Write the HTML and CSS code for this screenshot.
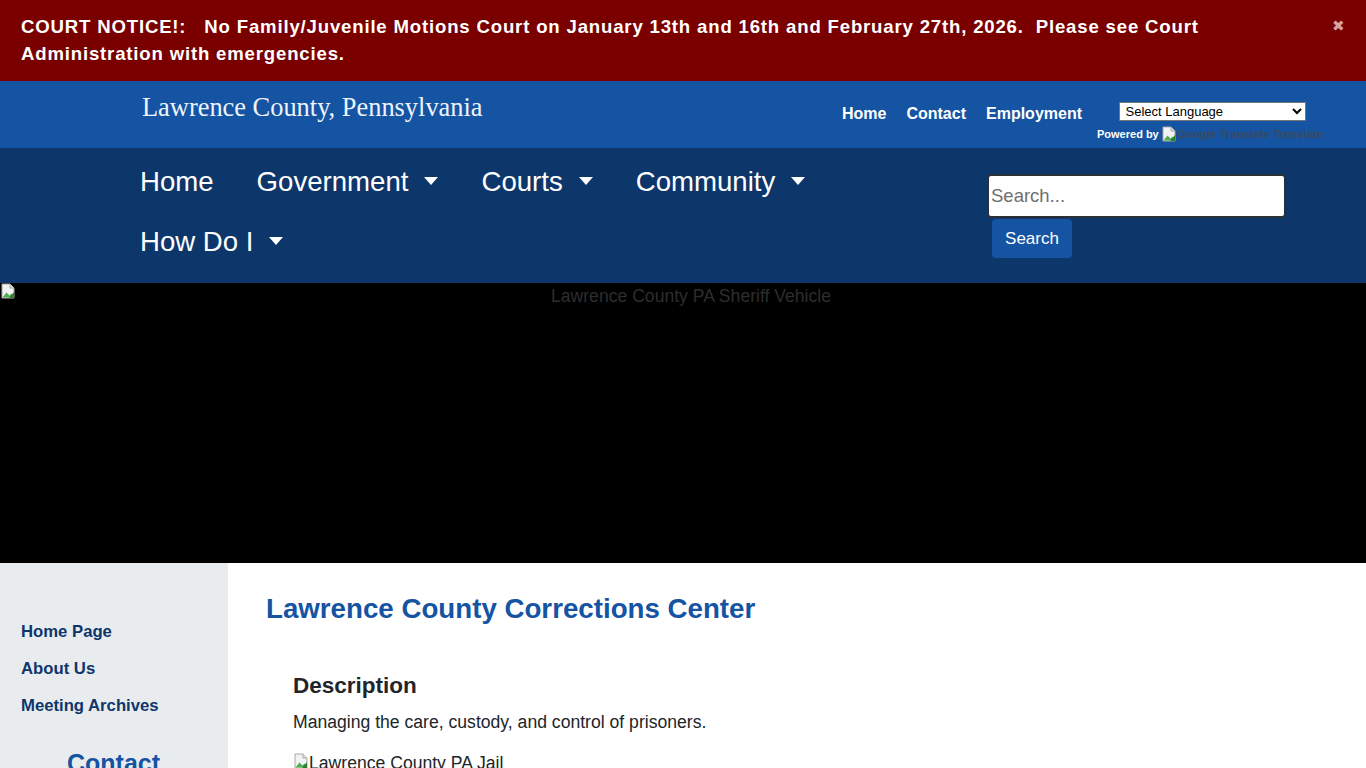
FILE: index.html
```html
<!DOCTYPE html>
<html lang="en">
<head>
<meta charset="utf-8">
<title>Lawrence County Corrections Center</title>
<link rel="stylesheet" href="styles.css">
</head>
<body>
<div class="notice">
  <p class="notice-text">COURT NOTICE!:&nbsp;&nbsp; No Family/Juvenile Motions Court on January 13th and 16th and February 27th, 2026.&nbsp; Please see Court Administration with emergencies.</p>
  <span class="notice-close">&#x2716;</span>
</div>
<header class="topbar">
  <div class="site-title">Lawrence County, Pennsylvania</div>
  <div class="top-right">
    <nav class="top-links">
      <a href="#">Home</a>
      <a href="#">Contact</a>
      <a href="#">Employment</a>
    </nav>
    <div class="translate">
      <select class="lang-select"><option>Select Language</option></select>
      <div class="powered">
        <span class="powered-by">Powered by</span>
        <span class="broken-img small"><svg viewBox="0 0 16 16" width="16" height="16"><path d="M2 1h8l4 4v10H2z" fill="#f2f2f2" stroke="#a9a9a9"/><path d="M10 1v4h4" fill="#ddd" stroke="#a9a9a9"/><path d="M2.5 14.5l4-5 3 3 2-2 2.5 4z" fill="#4caf50"/><path d="M9 15l5-6v6z" fill="#2e7d32"/></svg></span><span class="gt-alt">Google Translate</span> <span class="gt-alt">Translate</span>
      </div>
    </div>
  </div>
</header>
<div class="mainnav">
  <ul class="menu">
    <li><a href="#">Home</a></li>
    <li><a href="#" class="dd">Government</a></li>
    <li><a href="#" class="dd">Courts</a></li>
    <li><a href="#" class="dd">Community</a></li>
    <li><a href="#" class="dd">How Do I</a></li>
  </ul>
  <form class="search">
    <input class="search-input" type="text" placeholder="Search...">
    <button class="search-btn" type="button">Search</button>
  </form>
</div>
<div class="hero">
  <span class="broken-img"><svg viewBox="0 0 16 16" width="16" height="16"><path d="M2 1h8l4 4v10H2z" fill="#f2f2f2" stroke="#a9a9a9"/><path d="M10 1v4h4" fill="#ddd" stroke="#a9a9a9"/><path d="M2.5 14.5l4-5 3 3 2-2 2.5 4z" fill="#4caf50"/><path d="M9 15l5-6v6z" fill="#2e7d32"/></svg></span>
  <span class="hero-alt">Lawrence County PA Sheriff Vehicle</span>
</div>
<div class="content">
  <aside class="sidebar">
    <ul class="side-links">
      <li><a href="#">Home Page</a></li>
      <li><a href="#">About Us</a></li>
      <li><a href="#">Meeting Archives</a></li>
    </ul>
    <h2 class="side-heading">Contact</h2>
  </aside>
  <main class="main">
    <h1 class="page-title">Lawrence County Corrections Center</h1>
    <section class="desc">
      <h2 class="desc-title">Description</h2>
      <p class="desc-text">Managing the care, custody, and control of prisoners.</p>
      <div class="jail-img"><span class="broken-img"><svg viewBox="0 0 16 16" width="16" height="16"><path d="M2 1h8l4 4v10H2z" fill="#f2f2f2" stroke="#a9a9a9"/><path d="M10 1v4h4" fill="#ddd" stroke="#a9a9a9"/><path d="M2.5 14.5l4-5 3 3 2-2 2.5 4z" fill="#4caf50"/><path d="M9 15l5-6v6z" fill="#2e7d32"/></svg></span>Lawrence County PA Jail</div>
    </section>
  </main>
</div>
</body>
</html>
```
FILE: styles.css
```css
* { box-sizing: border-box; }
html, body { margin: 0; padding: 0; }
body {
  font-family: "Liberation Sans", Arial, sans-serif;
  font-size: 17.6px;
  color: #212529;
  background: #fff;
  overflow: hidden;
}
a { text-decoration: none; color: inherit; }
ul { list-style: none; margin: 0; padding: 0; }

.notice {
  position: relative;
  background: #7a0000;
  color: #fff;
  height: 81px;
  padding: 13px 120px 0 21px;
}
.notice-text {
  margin: 0;
  font-weight: bold;
  font-size: 18.6px;
  letter-spacing: 0.82px;
  line-height: 27px;
}
.notice-close {
  position: absolute;
  right: 21px;
  top: 16px;
  color: #d9a3a3;
  font-size: 15px;
  line-height: 20px;
}

.topbar {
  background: #1553a3;
  height: 67px;
  display: flex;
  justify-content: space-between;
  padding: 0 39px 0 142px;
}
.site-title {
  font-family: "Liberation Serif", "Times New Roman", serif;
  font-size: 26.4px;
  color: #eef3fb;
  padding-top: 11px;
}
.top-right {
  display: flex;
  align-items: flex-start;
  padding-top: 21px;
}
.top-links {
  display: flex;
  gap: 20px;
  padding-top: 2px;
  margin-left: 1px;
}
.top-links a {
  color: #fff;
  font-weight: bold;
  font-size: 16px;
  line-height: 20px;
}
.translate {
  margin-left: 15px;
  width: 230px;
  text-align: center;
}
.lang-select {
  width: 187px;
  height: 19px;
  font-family: "Liberation Sans", Arial, sans-serif;
  font-size: 13px;
  padding: 0 2px;
  border: 1px solid #767676;
  background: #fff;
  color: #000;
  border-radius: 0;
  margin-top: 0;
  display: block;
  margin-left: auto;
  margin-right: auto;
}
.powered {
  display: flex;
  align-items: center;
  white-space: nowrap;
  font-size: 11px;
  margin-top: 4px;
  height: 17px;
}
.powered-by {
  color: #fff;
  font-weight: bold;
  margin-right: 2px;
}
.gt-alt {
  color: #3c4a5e;
  font-weight: bold;
  font-size: 11.5px;
  margin-right: 3px;
}
.broken-img { display: inline-flex; width: 16px; height: 16px; flex-shrink: 0; }
.broken-img svg { display: block; }

.mainnav {
  background: #0d366b;
  height: 135px;
  display: flex;
  padding: 4px 80px 0 140px;
}
.menu {
  flex: 1;
  display: flex;
  flex-wrap: wrap;
  column-gap: 43px;
  align-content: flex-start;
  max-width: 800px;
}
.menu a {
  display: inline-flex;
  align-items: center;
  height: 60px;
  color: #fff;
  font-size: 27.6px;
}
.menu a.dd::after {
  content: "";
  margin-left: 16px;
  border-top: 8px solid #fff;
  border-left: 7.5px solid transparent;
  border-right: 7.5px solid transparent;
  margin-top: -2px;
}
.search {
  width: 298px;
  padding-top: 22px;
  margin-left: 48px;
}
.search-input {
  display: block;
  width: 299px;
  height: 44px;
  margin-left: -1px;
  border: 2px solid #2b2f36;
  border-radius: 4px;
  background: #fff;
  font-family: "Liberation Sans", Arial, sans-serif;
  font-size: 18.5px;
  padding: 0 2px;
  color: #333;
}
.search-input::placeholder { color: #6f6f6f; }
.search-btn {
  display: block;
  margin-left: 4px;
  margin-top: 1px;
  width: 80px;
  height: 39px;
  background: #1553a3;
  color: #fff;
  border: none;
  border-radius: 4px;
  font-family: "Liberation Sans", Arial, sans-serif;
  font-size: 17px;
  padding: 0;
}

.hero {
  background: #000;
  height: 280px;
  display: grid;
  grid-template-columns: 16px 1fr;
  align-items: start;
}
.hero-alt {
  text-align: center;
  color: #2d2d2d;
  line-height: 20px;
  padding-top: 3px;
}

.content {
  display: flex;
  min-height: 300px;
}
.sidebar {
  width: 228px;
  flex-shrink: 0;
  background: #e9ecef;
  padding: 50px 0 0 21px;
}
.side-links li a {
  display: block;
  line-height: 37px;
  font-weight: bold;
  font-size: 16.7px;
  color: #0d366b;
}
.side-heading {
  margin: 25px 0 0 -22px;
  text-align: center;
  color: #1553a3;
  font-size: 25px;
  font-weight: bold;
  line-height: 29px;
}
.main {
  flex: 1;
  padding: 29px 0 0 38px;
}
.page-title {
  margin: 0;
  color: #1553a3;
  font-size: 27.7px;
  line-height: 34px;
  font-weight: bold;
}
.desc {
  padding: 46px 0 0 27px;
}
.desc-title {
  margin: 0;
  font-size: 22.5px;
  line-height: 27px;
  font-weight: bold;
  color: #212529;
}
.desc-text {
  margin: 13px 0 0;
  line-height: 20px;
}
.jail-img {
  margin-top: 21px;
  display: flex;
  align-items: flex-start;
  line-height: 20px;
  color: #212529;
}
```
